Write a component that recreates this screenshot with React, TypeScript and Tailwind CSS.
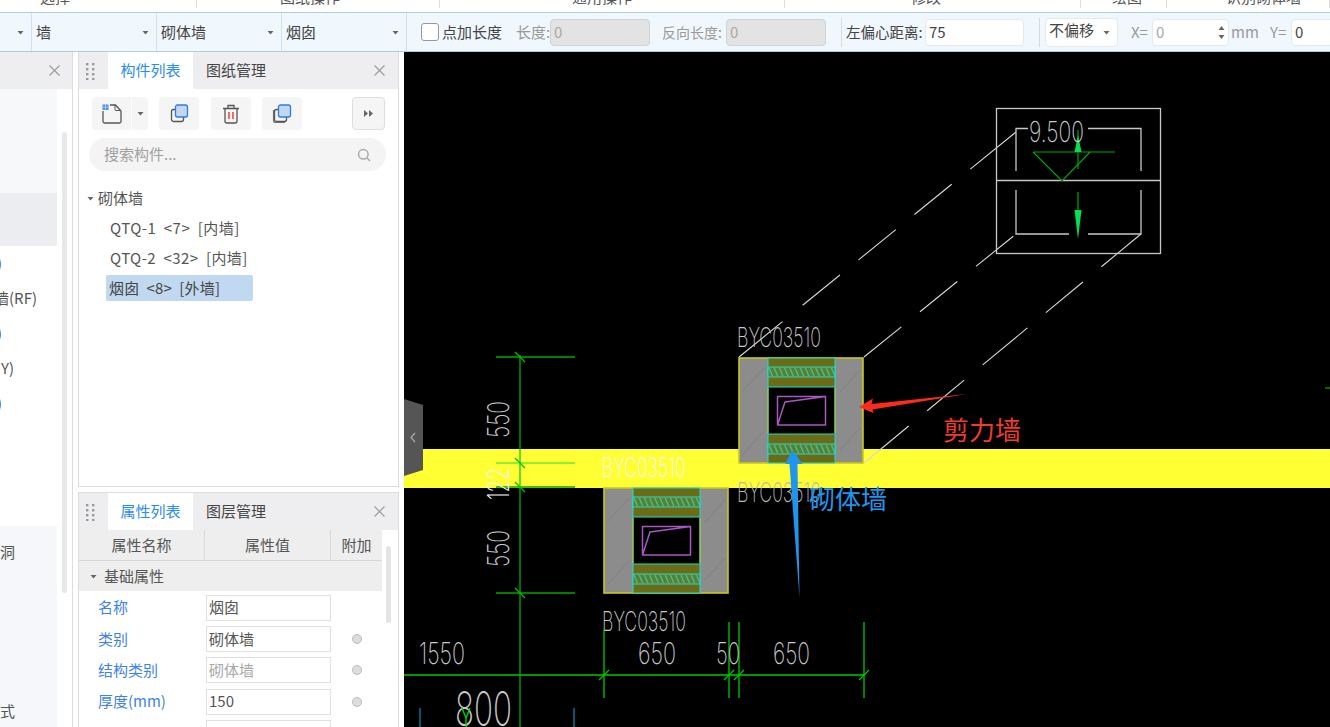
const font = "font-['Microsoft_YaHei','Noto_Sans_CJK_SC','Noto_Sans',sans-serif]";
const cadFont = "Inter, 'Liberation Sans', sans-serif";

function Caret({ className = "" }: { className?: string }) {
  return (
    <svg width="7" height="5" viewBox="0 0 7 5" className={`shrink-0 ${className}`}>
      <path d="M0.5 1h6L3.5 4.5z" fill="#666" />
    </svg>
  );
}

function SelectCell({ label, width }: { label: string; width: string }) {
  return (
    <div className={`flex h-full shrink-0 items-center justify-between border-r border-[#d3e1ee] pl-1 pr-[7px] ${width}`}>
      <span>{label}</span>
      <Caret />
    </div>
  );
}

function ToolbarInput({ value, width, disabled }: { value: string; width: string; disabled?: boolean }) {
  return (
    <div
      className={`flex h-[27px] shrink-0 items-center rounded-[4px] border px-[3px] ${width} ${
        disabled ? "border-[#cfd3d8] bg-[#e3e3e3] text-[#a8a8a8]" : "border-[#e6e9ec] bg-white"
      }`}
    >
      {value}
    </div>
  );
}

function ToolbarLabel({ text, width, className = "" }: { text: string; width: string; className?: string }) {
  return <span className={`shrink-0 whitespace-nowrap ${width} ${className}`}>{text}</span>;
}

function TopToolbar() {
  return (
    <div className="flex h-[40px] items-center overflow-hidden border-y border-[#a9cdec] bg-[#f0f7fd] text-[15px] text-[#444]">
      <SelectCell label="" width="w-[32px]" />
      <SelectCell label="墙" width="w-[125px]" />
      <SelectCell label="砌体墙" width="w-[125px]" />
      <SelectCell label="烟囱" width="w-[125px]" />
      <div className="ml-[14px] h-[18px] w-[18px] shrink-0 rounded-[3px] border border-[#999] bg-white" />
      <ToolbarLabel text="点加长度" width="w-[74px]" className="ml-[3px]" />
      <ToolbarLabel text="长度:" width="w-[34px]" className="text-[#999]" />
      <ToolbarInput value="0" width="w-[100px]" disabled />
      <ToolbarLabel text="反向长度:" width="w-[64px]" className="ml-[12px] text-[14px] text-[#999]" />
      <ToolbarInput value="0" width="w-[100px]" disabled />
      <div className="ml-[15px] h-[29px] shrink-0 border-l border-[#d3dbe3]" />
      <ToolbarLabel text="左偏心距离:" width="w-[79px]" className="ml-[4px] text-[14.5px]" />
      <ToolbarInput value="75" width="w-[99px]" />
      <div className="ml-[15px] h-[29px] shrink-0 border-l border-[#d3dbe3]" />
      <div className="ml-[5px] flex h-[29px] w-[73px] shrink-0 items-center justify-between rounded-[4px] border border-[#e6e9ec] bg-white pl-[3px] pr-[7px]">
        <span className="-mt-[3px]">不偏移</span>
        <Caret />
      </div>
      <ToolbarLabel text="X=" width="w-[21px]" className="ml-[13px] text-[#999]" />
      <div className="flex h-[27px] w-[77px] shrink-0 items-center justify-between rounded-[4px] border border-[#e6e9ec] bg-white px-[3px] text-[#a8a8a8]">
        <span>0</span>
        <span className="flex flex-col gap-[5px]">
          <svg width="7" height="4" viewBox="0 0 7 4"><path d="M3.5 0L6.5 4H.5z" fill="#666" /></svg>
          <svg width="7" height="4" viewBox="0 0 7 4"><path d="M3.5 4L6.5 0H.5z" fill="#666" /></svg>
        </span>
      </div>
      <ToolbarLabel text="mm" width="w-[39px]" className="ml-[2px] text-[#999]" />
      <ToolbarLabel text="Y=" width="w-[21px]" className="text-[#999]" />
      <ToolbarInput value="0" width="w-[60px]" />
    </div>
  );
}

function Grip() {
  return (
    <svg width="10" height="18" viewBox="0 0 10 18" className="ml-[6px] shrink-0">
      {[1, 7].flatMap((x) =>
        [1, 6, 11, 16].map((y) => <rect key={`${x}-${y}`} x={x} y={y} width="2.4" height="2.4" fill="#9a9a9a" />),
      )}
    </svg>
  );
}

function CloseIcon() {
  return (
    <svg width="11" height="11" viewBox="0 0 11 11">
      <path d="M.5.5l10 10M10.5.5l-10 10" stroke="#9c9c9c" strokeWidth="1.2" />
    </svg>
  );
}

function PanelHeader({ active, other }: { active: string; other: string }) {
  return (
    <div className="flex h-[37px] shrink-0 items-center bg-[#eeeef0] text-[15px]">
      <Grip />
      <div className="ml-[13px] flex h-full w-[85px] items-center justify-center bg-white text-[#2b8cf0]">{active}</div>
      <div className="ml-[13px] text-[#444]">{other}</div>
      <div className="ml-auto mr-[13px] flex">
        <CloseIcon />
      </div>
    </div>
  );
}

function IconButton({ children }: { children: React.ReactNode }) {
  return <div className="flex h-[33px] w-[40px] items-center justify-center rounded-[4px] bg-[#f5f5f5]">{children}</div>;
}

function CopyIcon({ stacked }: { stacked?: boolean }) {
  return (
    <svg width="20" height="20" viewBox="0 0 20 20" fill="none">
      {stacked && <path d="M1.5 6v10.5a2 2 0 0 0 2 2H13" stroke="#777" strokeWidth="1.2" />}
      <rect x="2.5" y="5.5" width="12" height="12" rx="2" stroke="#555" strokeWidth="1.3" />
      <rect x="6.5" y="1" width="12" height="12" rx="2" fill="#c3d6f2" stroke="#2b7de0" strokeWidth="1.3" />
    </svg>
  );
}

function ComponentList() {
  return (
    <div className="flex h-[435px] w-[321px] flex-col border border-t-0 border-[#dddddd] bg-white">
      <PanelHeader active="构件列表" other="图纸管理" />
      <div className="mt-[8px] flex h-[33px] items-center pl-[13px]">
        <div className="flex h-[33px] w-[56px] items-center rounded-[4px] bg-[#f5f5f5]">
          <div className="flex h-full w-[40px] items-center justify-center border-r border-white">
            <svg width="20" height="20" viewBox="0 0 20 20" fill="none">
              <path d="M1 7v10.5a1.5 1.5 0 0 0 1.5 1.5h15a1.5 1.5 0 0 0 1.5-1.5V7L13.5 1H8" stroke="#555" strokeWidth="1.3" />
              <path d="M13 1v4.5a1 1 0 0 0 1 1h5" stroke="#555" strokeWidth="1" />
              <rect x="0.5" y="0.5" width="6" height="5.5" fill="#4a92ea" />
              <path d="M0.5 3.2h6M3.5 .5v5.5" stroke="#c6dcf7" strokeWidth="0.7" />
            </svg>
          </div>
          <Caret className="ml-[5px]" />
        </div>
        <div className="ml-[11px]">
          <IconButton><CopyIcon /></IconButton>
        </div>
        <div className="ml-[12px]">
          <IconButton>
            <svg width="18" height="20" viewBox="0 0 18 20" fill="none">
              <path d="M1 4.5h16M6 4.5V1.5h6v3M3 4.5v12.5a2 2 0 0 0 2 2h8a2 2 0 0 0 2-2V4.5" stroke="#555" strokeWidth="1.3" />
              <path d="M7 8v7M11 8v7" stroke="#e8352e" strokeWidth="1.4" />
            </svg>
          </IconButton>
        </div>
        <div className="ml-[11px]">
          <IconButton><CopyIcon stacked /></IconButton>
        </div>
        <div className="ml-[50px] flex h-[33px] w-[33px] items-center justify-center rounded-[4px] border border-[#dedede] bg-[#f5f5f5]">
          <svg width="9" height="7" viewBox="0 0 9 7"><path d="M0 0l4 3.5L0 7zM5 0l4 3.5L5 7z" fill="#666" /></svg>
        </div>
      </div>
      <div className="ml-[10px] mt-[8px] flex h-[33px] w-[297px] items-center justify-between rounded-full bg-[#f4f4f4] pl-[15px] pr-[15px] text-[15px] text-[#a0a0a0]">
        <span>搜索构件...</span>
        <svg width="14" height="14" viewBox="0 0 14 14" fill="none">
          <circle cx="6.3" cy="6.3" r="4.8" stroke="#aaa" strokeWidth="1.5" />
          <path d="M10 10l3 3" stroke="#aaa" strokeWidth="1.5" />
        </svg>
      </div>
      <div className="mt-[12px] flex h-[30px] items-center pl-[8px] text-[15px] text-[#555]">
        <Caret />
        <span className="ml-[4px]">砌体墙</span>
      </div>
      <div className="flex h-[30px] items-center whitespace-pre pl-[31px] text-[15px] tracking-[0.45px] text-[#555]">QTQ-1  &lt;7&gt;  [内墙]</div>
      <div className="flex h-[30px] items-center whitespace-pre pl-[31px] text-[15px] tracking-[0.4px] text-[#555]">QTQ-2  &lt;32&gt;  [内墙]</div>
      <div className="ml-[27px] mt-[2px] flex h-[26px] w-[147px] items-center whitespace-pre rounded-[2px] bg-[#c1d9f0] pl-[3px] text-[15px] tracking-[0.2px] text-[#444]">烟囱  &lt;8&gt;  [外墙]</div>
    </div>
  );
}

const propRows = [
  { name: "名称", value: "烟囱" },
  { name: "类别", value: "砌体墙", dot: true },
  { name: "结构类别", value: "砌体墙", dot: true, muted: true },
  { name: "厚度(mm)", value: "150", dot: true },
  { name: "", value: "是", dot: true },
];

function PropertyList() {
  return (
    <div className="relative mt-[5px] flex h-[235px] w-[321px] flex-col overflow-hidden border border-b-0 border-[#dddddd] bg-white">
      <PanelHeader active="属性列表" other="图层管理" />
      <div className="flex h-[31px] w-[303px] shrink-0 border-b border-[#d8d8d8] bg-[#eeeeee] text-center text-[15px] leading-[30px] text-[#555]">
        <div className="w-[126px] border-r border-[#d8d8d8]">属性名称</div>
        <div className="w-[126px] border-r border-[#d8d8d8]">属性值</div>
        <div className="w-[51px]">附加</div>
      </div>
      <div className="flex h-[30px] w-[303px] shrink-0 items-center bg-[#eeeeee] pl-[11px] text-[15px] text-[#555]">
        <Caret />
        <span className="ml-[7px]">基础属性</span>
      </div>
      <div className="pt-[1px]">
        {propRows.map((row) => (
          <div key={row.name || "more"} className="flex h-[31.3px] items-center text-[15px]">
            <span className="w-[127px] pl-[19px] text-[#3f7ff0]">{row.name}</span>
            <div
              className={`flex h-[26px] w-[125px] items-center border border-[#e0e0e0] pl-[2px] ${
                row.muted ? "text-[#a8a8a8]" : "text-[#555]"
              }`}
            >
              {row.value}
            </div>
            {row.dot && <div className="ml-[21px] h-[10px] w-[10px] rounded-full border border-[#bdbdbd] bg-[#dcdcdc]" />}
          </div>
        ))}
      </div>
      <div className="absolute left-[307px] top-[53px] h-[77px] w-[5px] rounded-full bg-[#e4e4e4]" />
    </div>
  );
}

function ClippedRow({ text, width, height, className = "" }: { text: string; width: string; height: string; className?: string }) {
  return (
    <div className={`flex items-center justify-end overflow-hidden whitespace-nowrap text-[15px] text-[#555] ${width} ${height} ${className}`}>
      {text}
    </div>
  );
}

function SidePanel() {
  return (
    <div className="relative flex h-full w-[73px] shrink-0 flex-col border-r border-[#dddddd] bg-white">
      <div className="flex h-[37px] shrink-0 items-center justify-end bg-[#eeeef0] pr-[12px]">
        <CloseIcon />
      </div>
      <div className="w-[57px]">
        <div className="h-[104px] bg-[#f7f8fa]" />
        <div className="h-[53px] bg-[#ebedf0]" />
        <ClippedRow text=")" width="w-[2px]" height="h-[35px]" className="text-[#5a7be0]" />
        <ClippedRow text="女儿墙(RF)" width="w-[37px]" height="h-[35px]" />
        <ClippedRow text=")" width="w-[2px]" height="h-[35px]" className="text-[#2b8cf0]" />
        <ClippedRow text="Y)" width="w-[14px]" height="h-[35px]" />
        <ClippedRow text=")" width="w-[2px]" height="h-[35px]" className="text-[#7a62d8]" />
        <div className="h-[105px]" />
        <div className="h-[201px] bg-[#f5f7fa]">
          <ClippedRow text="洞" width="w-[15px]" height="h-[52px]" />
          <div className="h-[112px]" />
          <ClippedRow text="式" width="w-[15px]" height="h-[42px]" />
        </div>
      </div>
      <div className="absolute left-[62px] top-[80px] h-[461px] w-[5px] rounded-full bg-[#e8e8e8]" />
    </div>
  );
}

function CadText({
  x, y, w, size = 30, fill = "#c8c8c8", rotate, children,
}: { x: number; y: number; w: number; size?: number; fill?: string; rotate?: boolean; children: string }) {
  return (
    <text
      x={x}
      y={y}
      fontSize={size}
      fontWeight={200}
      fontFamily={cadFont}
      fill={fill}
      textLength={w}
      lengthAdjust="spacingAndGlyphs"
      transform={rotate ? `rotate(-90 ${x} ${y})` : undefined}
    >
      {children}
    </text>
  );
}

function Hatch({ y }: { y: number }) {
  const xs = Array.from({ length: 13 }, (_, i) => 769 + i * 5.2);
  return (
    <g>
      <rect x="768" y={y} width="67" height="10" fill="#6b7a20" />
      {xs.map((x) => (
        <path key={x} d={`M${x} ${y + 1}l3.5 8`} stroke="#20c8b4" strokeWidth="1.5" />
      ))}
      <rect x="768" y={y} width="67" height="10" fill="none" stroke="#19e0d0" strokeWidth="1" />
    </g>
  );
}

function Opening() {
  return (
    <g>
      <rect x="739" y="358" width="124" height="105" fill="#8c8c8c" stroke="#c9c91e" strokeWidth="1.6" />
      <path d="M742 392l22 -24M742 455l22 -24M840 392l20 -22M840 450l20 -22" stroke="#808080" strokeWidth="1" />
      <rect x="768" y="358" width="67" height="29" fill="#6b6b18" />
      <rect x="768" y="434" width="67" height="29" fill="#6b6b18" />
      <rect x="768" y="387" width="67" height="47" fill="#000" />
      <path d="M768 358v105M835 358v105M768 358h67M768 463h67M768 387h67M768 434h67" stroke="#19e0d0" strokeWidth="1" fill="none" />
      <path d="M768 388v45M835 388v45" stroke="#c9c91e" strokeWidth="1" />
      <Hatch y={367} />
      <Hatch y={444} />
      <path
        d="M777.5 396.5H825.5V425H777.5ZM777.5 425L785 402L825.5 396.5"
        fill="none"
        stroke="#a957c4"
        strokeWidth="1.5"
        strokeLinejoin="round"
      />
    </g>
  );
}

function Tick({ x, y }: { x: number; y: number }) {
  return <path d={`M${x - 5} ${y - 5}L${x + 5} ${y + 5}`} stroke="#00c000" strokeWidth="1.2" />;
}

function BottomTick({ x, y }: { x: number; y: number }) {
  return <path d={`M${x - 5} ${y + 5}L${x + 5} ${y - 5}`} stroke="#00c800" strokeWidth="1.2" />;
}

function Drawing() {
  const g1 = "#00a800";
  const g2 = "#00c800";
  return (
    <svg width="926" height="675" viewBox="404 52 926 675" className="block">
      <rect x="404" y="52" width="926" height="675" fill="#000" />
      <rect x="404" y="449" width="926" height="39" fill="#ffff33" />

      {/* dashed projection lines */}
      <g stroke="#d8d8d8" strokeWidth="1.1" fill="none">
        <path d="M739 357L1016 132" strokeDasharray="56 26 48 24 48 24 48 24 60 24" />
        <path d="M864 357L1016 234" strokeDasharray="48 24" />
        <path d="M864 463L1141 234" strokeDasharray="58 24 48 24" />
      </g>

      {/* section box */}
      <g stroke="#c8c8c8" strokeWidth="1.3" fill="none">
        <rect x="996.5" y="108.5" width="164" height="145" />
        <path d="M996 180.5H1160" />
        <path d="M1016 171V128.5H1028M1088 128.5H1141V171M1016 190V234H1069M1088 234H1141V190" />
      </g>
      <path d="M1033 152H1115M1033 152L1062 181L1090 152" stroke={g1} strokeWidth="1.2" fill="none" />
      <path d="M1078 130V169M1078 192V210" stroke={g1} strokeWidth="1.2" />
      <path d="M1078 135L1081.5 152H1074.5Z M1074.5 210H1081.5L1078 239Z" fill="#00e050" />
      <CadText x={1029} y={142} w={55} size={29}>9.500</CadText>

      {/* openings */}
      <Opening />
      <g transform="translate(-135 130)">
        <Opening />
      </g>

      <CadText x={737} y={347} w={84} size={27}>BYC03510</CadText>
      <CadText x={602} y={477} w={84} size={27} fill="#f4f4f4">BYC03510</CadText>
      <CadText x={737} y={502} w={84} size={27} fill="#b8b8b8">BYC03510</CadText>
      <CadText x={602} y={631} w={84} size={27}>BYC03510</CadText>

      {/* left dimension */}
      <path d="M520 355V727M496 357H575M496 487H575M496 593H575" stroke={g1} strokeWidth="1.3" fill="none" />
      <path d="M496 463H575M520 449V488" stroke="#66ee33" strokeWidth="1.3" fill="none" />
      <Tick x={520} y={357} />
      <Tick x={520} y={463} />
      <Tick x={520} y={487} />
      <Tick x={520} y={593} />
      <CadText x={509} y={438} w={37} size={30} rotate>550</CadText>
      <CadText x={509} y={500} w={32} size={30} fill="#f4f4f4" rotate>122</CadText>
      <CadText x={509} y={567} w={37} size={30} rotate>550</CadText>

      {/* bottom dimension */}
      <path d="M404 675H864" stroke={g2} strokeWidth="1.3" />
      <path d="M604 630V698M729 622V698M739 622V698M864 622V698" stroke={g2} strokeWidth="1.3" fill="none" />
      <BottomTick x={604} y={675} />
      <BottomTick x={729} y={675} />
      <BottomTick x={739} y={675} />
      <BottomTick x={864} y={675} />
      <CadText x={419} y={664} w={46} size={30}>1550</CadText>
      <CadText x={638} y={664} w={38} size={30}>650</CadText>
      <CadText x={716} y={664} w={24} size={30}>50</CadText>
      <CadText x={773} y={664} w={37} size={30}>650</CadText>
      <CadText x={455} y={726} w={57} size={48}>800</CadText>
      <path d="M462 708L466 718L470 708M466 718V727" stroke="#00d000" strokeWidth="1.4" fill="none" />
      <path d="M420 708V727M574 708V727" stroke="#0a84a8" strokeWidth="1.3" />
      <path d="M1325 388H1330" stroke={g1} strokeWidth="1.3" />

      {/* annotation arrows */}
      <path d="M859 407L873 398.5L871.5 404L967 394L872.5 409.5L873.5 413Z" fill="#ff2a1c" />
      <path d="M792.5 450L802.5 464H797.5L799.5 598L789.5 464H785Z" fill="#1f96ee" />

      {/* collapse handle */}
      <path d="M404 399L423 405V470L404 476Z" fill="#555555" />
      <path d="M415 433L411 437.5L415 442" stroke="#aaa" strokeWidth="1.3" fill="none" />
    </svg>
  );
}

function Canvas() {
  return (
    <div className="relative h-full flex-1 overflow-hidden bg-black">
      <Drawing />
      <div className="absolute left-[539px] top-[360px] text-[26px] leading-[34px] text-[#f03a2e]">剪力墙</div>
      <div className="absolute left-[405px] top-[429px] text-[26px] leading-[34px] text-[#1f96ee]">砌体墙</div>
    </div>
  );
}

function RibbonStrip() {
  const groups = [
    { label: "选择", width: "w-[197px]", pad: "pl-[40px]" },
    { label: "图纸操作", width: "w-[243px]", pad: "pl-[83px]" },
    { label: "通用操作", width: "w-[345px]", pad: "pl-[132px]" },
    { label: "修改", width: "w-[296px]", pad: "pl-[126px]" },
    { label: "绘图", width: "w-[86px]", pad: "pl-[31px]" },
    { label: "识别砌体墙", width: "w-[163px]", pad: "pl-[59px]" },
  ];
  return (
    <div className="flex h-[12px] overflow-hidden bg-white text-[15px] leading-[12px] text-[#555]">
      {groups.map((g) => (
        <div key={g.label} className={`h-[8px] shrink-0 whitespace-nowrap border-r border-[#ddd] ${g.width} ${g.pad}`}>
          <span className="relative block -translate-y-[9px]">{g.label}</span>
        </div>
      ))}
    </div>
  );
}

export default function App() {
  return (
    <div className={`flex h-[727px] w-[1330px] flex-col overflow-hidden bg-white ${font}`}>
      <RibbonStrip />
      <TopToolbar />
      <div className="flex min-h-0 flex-1">
        <SidePanel />
        <div className="ml-[5px] flex w-[321px] shrink-0 flex-col">
          <ComponentList />
          <PropertyList />
        </div>
        <div className="w-[5px] shrink-0" />
        <Canvas />
      </div>
    </div>
  );
}
